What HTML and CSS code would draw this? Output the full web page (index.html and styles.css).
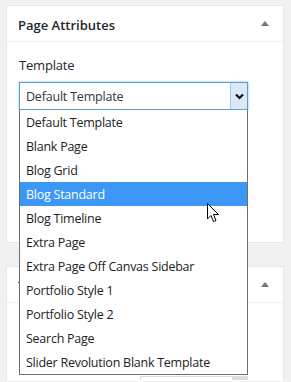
FILE: index.html
```html
<!DOCTYPE html>
<html lang="en">
<head>
    <meta charset="UTF-8">
    <title>Page Attributes</title>
    <link rel="stylesheet" href="styles.css">
</head>
<body>
    <div class="postbox">
        <div class="postbox-header">
            <h2>Page Attributes</h2>
            <span class="toggle-arrow"></span>
        </div>
        <div class="inside inside-attributes">
            <p class="attr-label">Template</p>

            <div class="select-wrap">
                <div class="select-box">
                    <span>Default Template</span>
                    <span class="select-btn">
                        <svg width="9" height="7" viewBox="0 0 9 7"><path d="M1 1.5 L4.5 5 L8 1.5" fill="none" stroke="#111" stroke-width="2.2"/></svg>
                    </span>
                </div>

                <!-- lista aperta del select -->
                <ul class="dropdown">
                    <li>Default Template</li>
                    <li>Blank Page</li>
                    <li>Blog Grid</li>
                    <li class="selected">Blog Standard</li>
                    <li>Blog Timeline</li>
                    <li>Extra Page</li>
                    <li>Extra Page Off Canvas Sidebar</li>
                    <li>Portfolio Style 1</li>
                    <li>Portfolio Style 2</li>
                    <li>Search Page</li>
                    <li>Slider Revolution Blank Template</li>
                </ul>

                <svg class="cursor" width="13" height="20" viewBox="0 0 13 20">
                    <path d="M0.5 0.5 L0.5 16 L4 12.5 L6.5 18.5 L9 17.5 L6.5 11.5 L11.5 11.5 Z" fill="#fff" stroke="#000" stroke-width="1"/>
                </svg>
            </div>
        </div>
    </div>

    <div class="postbox last">
        <div class="postbox-header">
            <span class="title-stub"></span>
            <span class="toggle-arrow"></span>
        </div>
        <div class="inside inside-second">
            <div class="fake-input"><span class="fake-btn"></span></div>
        </div>
    </div>
</body>
</html>
```

FILE: styles.css
```css
html, body {
    overflow: hidden;
}

body {
    margin: 0;
    padding: 5px 7px 0 6px;
    background-color: #f1f1f1;
    font-family: "Open Sans", "Liberation Sans", sans-serif;
    color: #23282d;
}

.postbox {
    background-color: #fff;
    border: 1px solid #e8e8e8;
    margin-bottom: 23px;
}

.postbox.last {
    margin-bottom: 0;
    border-bottom-color: #fff;
}

.postbox-header {
    display: flex;
    align-items: center;
    justify-content: space-between;
    height: 35px;
    padding: 0 14px 0 11px;
    border-bottom: 1px solid #eeeeee;
}

.postbox-header h2 {
    margin: 0;
    padding-top: 2px;
    font-size: 13px;
    font-weight: 600;
    color: #23282d;
}

/* triangolo per chiudere il box */
.toggle-arrow {
    width: 0;
    height: 0;
    border-left: 4px solid transparent;
    border-right: 4px solid transparent;
    border-bottom: 5px solid #72777c;
}

.title-stub {
    width: 8px;
    height: 1px;
    margin-top: -4px;
    background-color: #555;
}

.inside {
    padding: 14px 12px 0 12px;
}

.inside-attributes {
    height: 186px;
}

.inside-second {
    display: flex;
    justify-content: flex-end;
    padding-top: 73px;
    padding-right: 35px;
    height: 4px;
    overflow: hidden;
}

.attr-label {
    margin: 0 0 8px 0;
    font-size: 13px;
    font-weight: 500;
    letter-spacing: -0.2px;
}

.select-wrap {
    position: relative;
    width: 229px;
}

.select-box {
    display: flex;
    align-items: center;
    justify-content: space-between;
    height: 26px;
    border: 1px solid #5b9dd9;
    box-shadow: 0 0 2px rgba(30, 140, 190, 0.6);
    font-size: 12.5px;
    letter-spacing: -0.2px;
    color: #32373c;
    padding-left: 6px;
}

.select-btn {
    display: flex;
    align-items: center;
    justify-content: center;
    width: 16px;
    height: 26px;
    background-color: #dbe8f6;
    border-left: 1px solid #a9c9ea;
}

.dropdown {
    position: absolute;
    top: 28px;
    left: 0;
    width: 227px;
    margin: 0;
    padding: 0;
    list-style: none;
    background-color: #fff;
    border: 1px solid #6e6e6e;
    border-top: none;
    z-index: 2;
}

.dropdown li {
    height: 24px;
    line-height: 25px;
    padding-left: 6px;
    font-size: 12.5px;
    letter-spacing: -0.25px;
    color: #222;
}

.dropdown li.selected {
    background-color: #3d97f7;
    color: #fff;
}

.cursor {
    position: absolute;
    left: 188px;
    top: 121px;
    z-index: 3;
}

.fake-input {
    display: flex;
    flex-shrink: 0;
    justify-content: flex-end;
    width: 106px;
    height: 24px;
    border: 1px solid #ddd;
}

.fake-btn {
    width: 15px;
    background-color: #dedede;
}
```
